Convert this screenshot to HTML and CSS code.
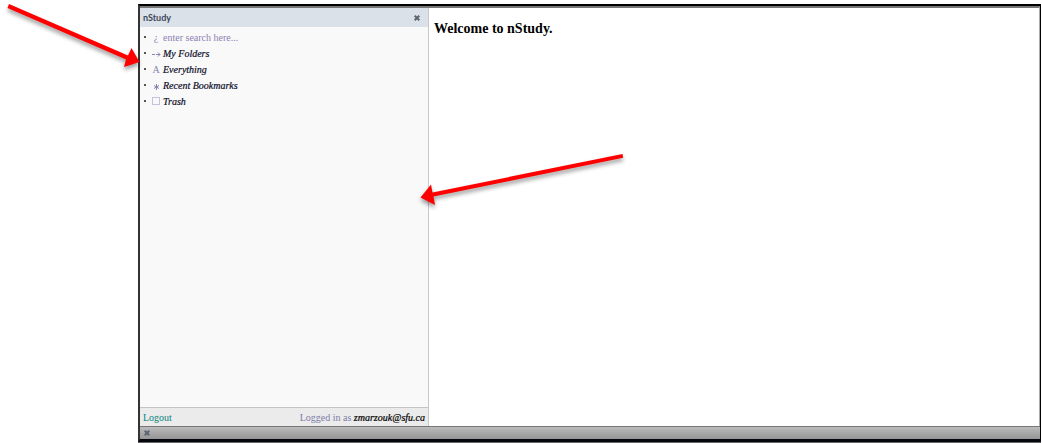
FILE: index.html
```
<!DOCTYPE html>
<html lang="en">
<head>
<meta charset="utf-8">
<title>nStudy</title>
<link rel="stylesheet" href="styles.css">
</head>
<body>
<div class="window">
  <div class="panes">
    <aside class="sidebar">
      <header class="sidebar-header">
        <span class="title">nStudy</span>
        <button class="close" type="button" aria-label="Close panel"><svg width="6" height="6" viewBox="0 0 6 6"><path d="M.7.7 5.3 5.3M5.3.7.7 5.3"/></svg></button>
      </header>
      <ul class="menu">
        <li><label class="icon" for="search">¿</label><input id="search" class="search" type="text" placeholder="enter search here..."></li>
        <li><span class="icon"><svg width="9" height="8" viewBox="0 0 9 8"><path d="M0 5.500h3M4 5.500h4M6 3.500l2 2-2 2"/></svg></span><a href="#folders">My Folders</a></li>
        <li><span class="icon">A</span><a href="#everything">Everything</a></li>
        <li><span class="icon"><svg width="9" height="9" viewBox="0 0 9 9"><path d="M4.500 3v6M2 4.500l5 3M7 4.500l-5 3"/></svg></span><a href="#bookmarks">Recent Bookmarks</a></li>
        <li><span class="icon"><span class="box"></span></span><a href="#trash">Trash</a></li>
      </ul>
      <footer class="account">
        <a class="logout" href="#logout">Logout</a>
        <span>Logged in as <em>zmarzouk@sfu.ca</em></span>
      </footer>
    </aside>
    <main class="content">
      <h1>Welcome to nStudy.</h1>
    </main>
  </div>
  <div class="statusbar">
    <button class="close" type="button" aria-label="Close bar"><svg width="6" height="6" viewBox="0 0 6 6"><path d="M.7.7 5.3 5.3M5.3.7.7 5.3"/></svg></button>
  </div>
</div>
<svg class="arrows" width="640" height="220" viewBox="0 0 640 220" aria-hidden="true">
  <path d="M9 4 7.500 8 126 59.500 124 67 139.500 62 131.500 48 128 55.500z"/>
  <path d="M622.500 154 623.200 157.800 433.500 196.500 435 205 420.500 197.500 431 184.500 432.500 192.500z"/>
</svg>
</body>
</html>
```
FILE: styles.css
```
* {
  box-sizing: border-box;
}

body {
  margin: 0;
  height: 100vh;
  padding: 4px 1px 1px 138px;
  display: flex;
  background: #fff;
  font-family: "Liberation Serif", "Times New Roman", serif;
  font-size: 10px;
}

.window {
  flex: 1;
  display: flex;
  flex-direction: column;
  border: solid #000;
  border-width: 2px 1px 3px 2px;
  border-left-color: #333;
  border-bottom-color: #05070f;
  box-shadow: 0 1px #666;
}

.panes {
  flex: 1;
  display: flex;
  border-top: 2px solid #777;
  border-right: 1px solid #aaa;
}

.sidebar {
  width: 289px;
  flex: none;
  display: flex;
  flex-direction: column;
  background: #f9f9f9;
  border-right: 1px solid #c8c8c8;
}

.sidebar-header {
  height: 19px;
  padding: 0 8px 0 3px;
  display: flex;
  align-items: center;
  justify-content: space-between;
  background: #dae1e9;
}

.title {
  font: bold 9px Lato, sans-serif;
  color: #3c4856;
}

.close {
  display: flex;
  padding: 0;
  border: 0;
  background: none;
}

.close svg {
  fill: none;
  stroke: #5c6670;
  stroke-width: 2;
}

.menu {
  flex: 1;
  margin: 0;
  padding: 2px 4px;
  list-style: none;
}

.menu li {
  height: 16px;
  display: flex;
  align-items: center;
}

.menu li::before {
  content: "";
  width: 2px;
  height: 2px;
  border-radius: 1px;
  background: #222;
}

.icon {
  width: 17px;
  padding: 0 2px 0 5px;
  display: flex;
  justify-content: center;
  color: #8585ae;
}

.icon svg {
  fill: none;
  stroke: #8585ae;
  stroke-width: 1;
}

.box {
  width: 8px;
  height: 8px;
  border: 1px solid #c3c3de;
}

.menu a {
  color: #0c0c28;
  font-style: italic;
  text-decoration: none;
  -webkit-text-stroke: 0.2px;
}

.search {
  flex: 1;
  min-width: 0;
  padding: 0;
  border: 0;
  background: none;
  font: inherit;
}

.search::placeholder {
  color: #8d80b4;
  opacity: 1;
}

.account {
  height: 19px;
  padding: 0 3px;
  display: flex;
  align-items: center;
  justify-content: space-between;
  background: #ebebeb;
  border-top: 1px solid #c4c4c4;
  color: #7d7da8;
}

.account em {
  color: #000;
  -webkit-text-stroke: 0.2px;
}

.logout {
  color: #078480;
  text-decoration: none;
}

.content {
  flex: 1;
  padding: 13px 5px;
}

.content h1 {
  margin: 0;
  font-size: 14px;
  line-height: 16px;
}

.statusbar {
  height: 13px;
  padding: 0 4px;
  display: flex;
  align-items: center;
  border-top: 1px solid #777;
  background: linear-gradient(#bbb, #959595);
}

.arrows {
  position: absolute;
  top: 0;
  left: 0;
  pointer-events: none;
  fill: #f00;
  filter: drop-shadow(0 3px 2px rgba(0, 0, 0, 0.4));
}
```
